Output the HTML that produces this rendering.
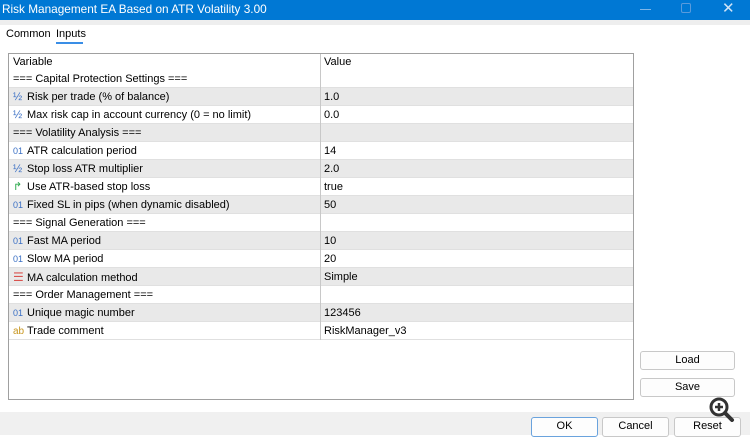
<!DOCTYPE html>
<html><head><style>
*{margin:0;padding:0;box-sizing:border-box}
body{width:750px;height:435px;overflow:hidden;background:#fff;font-family:"Liberation Sans",sans-serif;font-size:11px;color:#000;position:relative}
.title{position:absolute;left:0;top:0;width:750px;height:20px;background:#0078d4;color:#fff;font-size:11.8px;line-height:19px;padding-left:2px}
.strip{position:absolute;left:0;top:20px;width:750px;height:5px;background:#eeeeee}
.tab{position:absolute;top:28px;font-size:11px}
.tbl{position:absolute;left:8px;top:53px;width:626px;height:347px;border:1px solid #a0a0a0;background:#fff}
.row{position:absolute;left:0;width:624px;height:18px;border-bottom:1px solid #e0e0e0;line-height:19px}
.g{background:#e9e9e9}
.c1{position:absolute;left:4px;top:0;white-space:nowrap}
.c2{position:absolute;left:315px;top:0}
.sep{position:absolute;left:311px;top:0;width:1px;height:286px;background:#c8c8c8;z-index:2}
.ic{display:inline-block;width:14px;font-size:9px;color:#3a6fc4}
.btn{position:absolute;height:19px;border:1px solid #c8c8c8;border-radius:3px;background:#fdfdfd;text-align:center;line-height:17px;font-size:11px}
.bot{position:absolute;left:0;top:412px;width:750px;height:23px;background:#f0f0f0}
</style></head><body>
<div class="title">Risk Management EA Based on ATR Volatility 3.00</div>
<div style="position:absolute;left:640px;top:9px;width:11px;height:1px;background:#7fb6e8"></div>
<div style="position:absolute;left:681px;top:3px;width:10px;height:10px;border:1px solid #5a9bdc;border-radius:2px"></div>
<div style="position:absolute;left:722px;top:0;color:#cfe4f7;font-size:15px;line-height:18px">✕</div>
<div class="strip"></div>
<div class="tab" style="left:6px">Common</div>
<div class="tab" style="left:56px">Inputs</div>
<div style="position:absolute;left:56px;top:42px;width:27px;height:2px;background:#3a8ee6"></div>
<div class="tbl">
<div class="sep"></div>
<div class="row" style="top:0;height:16px;line-height:17px;border:none"><span class="c1">Variable</span><span class="c2">Value</span></div>
<div class="row" style="top:16px"><span class="c1">=== Capital Protection Settings ===</span></div>
<div class="row g" style="top:34px"><span class="c1"><span class="ic" style="font-size:11px">½</span>Risk per trade (% of balance)</span><span class="c2">1.0</span></div>
<div class="row" style="top:52px"><span class="c1"><span class="ic" style="font-size:11px">½</span>Max risk cap in account currency (0 = no limit)</span><span class="c2">0.0</span></div>
<div class="row g" style="top:70px"><span class="c1">=== Volatility Analysis ===</span></div>
<div class="row" style="top:88px"><span class="c1"><span class="ic">01</span>ATR calculation period</span><span class="c2">14</span></div>
<div class="row g" style="top:106px"><span class="c1"><span class="ic" style="font-size:11px">½</span>Stop loss ATR multiplier</span><span class="c2">2.0</span></div>
<div class="row" style="top:124px"><span class="c1"><span class="ic" style="color:#2aa84a;font-size:11px">↱</span>Use ATR-based stop loss</span><span class="c2">true</span></div>
<div class="row g" style="top:142px"><span class="c1"><span class="ic">01</span>Fixed SL in pips (when dynamic disabled)</span><span class="c2">50</span></div>
<div class="row" style="top:160px"><span class="c1">=== Signal Generation ===</span></div>
<div class="row g" style="top:178px"><span class="c1"><span class="ic">01</span>Fast MA period</span><span class="c2">10</span></div>
<div class="row" style="top:196px"><span class="c1"><span class="ic">01</span>Slow MA period</span><span class="c2">20</span></div>
<div class="row g" style="top:214px"><span class="c1"><span class="ic" style="color:#d9534f;font-size:12px">☰</span>MA calculation method</span><span class="c2">Simple</span></div>
<div class="row" style="top:232px"><span class="c1">=== Order Management ===</span></div>
<div class="row g" style="top:250px"><span class="c1"><span class="ic">01</span>Unique magic number</span><span class="c2">123456</span></div>
<div class="row" style="top:268px"><span class="c1"><span class="ic" style="color:#c8961e;font-size:10px">ab</span>Trade comment</span><span class="c2">RiskManager_v3</span></div>
</div>
<div class="btn" style="left:640px;top:351px;width:95px">Load</div>
<div class="btn" style="left:640px;top:378px;width:95px">Save</div>
<div class="bot"></div>
<div class="btn" style="left:531px;top:417px;width:67px;height:20px;border-color:#6aa3dd">OK</div>
<div class="btn" style="left:602px;top:417px;width:67px;height:20px">Cancel</div>
<div class="btn" style="left:674px;top:417px;width:67px;height:20px">Reset</div>
<svg style="position:absolute;left:708px;top:396px" width="32" height="26" viewBox="0 0 32 26">
<circle cx="11" cy="11" r="8" fill="#fff" stroke="#333" stroke-width="3"/>
<path d="M7 11h8M11 7v8" stroke="#333" stroke-width="2.5"/>
<path d="M17 17l7 7" stroke="#333" stroke-width="4" stroke-linecap="round"/>
</svg>
</body></html>
